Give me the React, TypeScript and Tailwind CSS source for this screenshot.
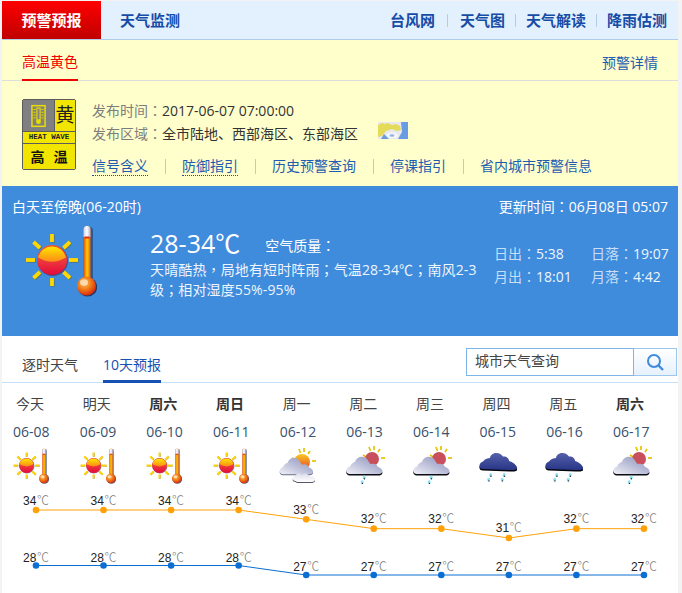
const FONT = '"Open Sans","Noto Sans CJK SC",sans-serif';

type Kind = 'sun' | 'partly' | 'rainSun' | 'rain';

function P({ c }: { c: string }) {
  return <span className="font-['Noto_Sans_CJK_TC']">{c}</span>;
}

function Sun() {
  const rays = [
    [27, 9, 27, 17], [27, 53, 27, 61], [1, 35, 10, 35], [44, 35, 53, 35],
    [8.5, 17, 15, 23], [45, 17, 38.5, 23], [8.5, 53, 15, 47], [45, 53, 38.5, 47],
  ];
  return (
    <svg viewBox="0 0 72 72" className="block h-full w-full">
      <defs>
        <linearGradient id="sunBody" x1="0" y1="0" x2="0" y2="1">
          <stop offset="0" stopColor="#f25a30" />
          <stop offset="0.5" stopColor="#ee3a3c" />
          <stop offset="1" stopColor="#e20a3c" />
        </linearGradient>
        <linearGradient id="sunTop" x1="0" y1="0" x2="0" y2="1">
          <stop offset="0" stopColor="#ffe600" />
          <stop offset="1" stopColor="#fb8a18" />
        </linearGradient>
        <linearGradient id="tube" x1="0" y1="0" x2="1" y2="0">
          <stop offset="0" stopColor="#e8400e" />
          <stop offset="0.5" stopColor="#ffd000" />
          <stop offset="1" stopColor="#e8600a" />
        </linearGradient>
        <radialGradient id="bulb" cx="0.4" cy="0.35" r="0.7">
          <stop offset="0" stopColor="#fbbf6a" />
          <stop offset="0.5" stopColor="#f07a12" />
          <stop offset="1" stopColor="#d81e14" />
        </radialGradient>
        <linearGradient id="glass" x1="0" y1="0" x2="1" y2="0">
          <stop offset="0" stopColor="#c9cfe6" />
          <stop offset="0.5" stopColor="#ffffff" />
          <stop offset="1" stopColor="#a9b0d0" />
        </linearGradient>
      </defs>
      {rays.map((r, i) => (
        <g key={i}>
          <line x1={r[0] + 0.7} y1={r[1] + 0.7} x2={r[2] + 0.7} y2={r[3] + 0.7} stroke="#6b5a10" strokeOpacity="0.5" strokeWidth="4" />
          <line x1={r[0]} y1={r[1]} x2={r[2]} y2={r[3]} stroke="#ffd800" strokeWidth="3.8" />
        </g>
      ))}
      <circle cx="27.8" cy="35.8" r="15.2" fill="#4a2030" fillOpacity="0.55" />
      <circle cx="27" cy="35" r="15" fill="url(#sunBody)" />
      <path d="M13 32.5 A14.4 14.4 0 0 1 41 32.5 Q27 41 13 32.5 Z" fill="url(#sunTop)" />
      <rect x="61" y="2" width="7" height="58" rx="3.5" fill="#1b2a50" fillOpacity="0.5" />
      <rect x="58.5" y="1" width="7" height="58" rx="3.5" fill="url(#tube)" />
      <path d="M58.5 12 V4.5 a3.5 3.5 0 0 1 7 0 V12 Z" fill="url(#glass)" />
      <rect x="59.5" y="11.5" width="5" height="2" fill="#e0301c" />
      <circle cx="62.6" cy="62" r="9.6" fill="#1b1b2a" fillOpacity="0.7" />
      <circle cx="61.5" cy="61" r="9.5" fill="url(#bulb)" />
      <ellipse cx="59" cy="57.5" rx="4" ry="3.2" fill="#ffe2b8" fillOpacity="0.85" />
    </svg>
  );
}

const CLOUD =
  'M4 26 C-1 26 -1 20 4 18.5 C5 15.5 8 14 9 14 C10 9 17 6.5 21 11 C23 14 24 16 25 16 C28 15 31 16 32 19 C36 20 38 24 35 25.5 C34 26 33 26 31 26 Z';
const DARK =
  'M3 21 C-2 21 -1.5 15 3 13.5 C5 10.5 8 10 10 10 C11 4.5 19 3 23 8.5 C26 8 29 10 29 13 C33 14 38 18 37 21 C36 22 33 22 30 22 Z';

function Drop({ x, y }: { x: number; y: number }) {
  return (
    <g>
      <ellipse cx={x + 1.2} cy={y} rx="1.5" ry="1.9" fill="#8fdff2" />
      <ellipse cx={x - 0.8} cy={y + 4.6} rx="1.5" ry="1.9" fill="#8fdff2" />
      <circle cx={x + 1.4} cy={y + 1.3} r="0.7" fill="#26303c" />
      <circle cx={x - 0.6} cy={y + 5.9} r="0.7" fill="#26303c" />
    </g>
  );
}

function SmallSun({ cx, cy, r, faded }: { cx: number; cy: number; r: number; faded?: boolean }) {
  const rays = [
    [cx - 3, cy - r - 5, cx - 1.5, cy - r - 1], [cx + 2, cy - r - 6, cx + 2, cy - r - 2],
    [cx + 8, cy - r - 3, cx + 6, cy - r], [cx + r + 2, cy - 1, cx + r + 6, cy - 1],
    [cx - r - 2, cy - 4, cx - r + 1, cy - 2],
  ];
  return (
    <g>
      {rays.map((a, i) => (
        <line key={i} x1={a[0]} y1={a[1]} x2={a[2]} y2={a[3]} stroke="#e6c200" strokeWidth="1.7" />
      ))}
      <circle cx={cx} cy={cy} r={r} fill={faded ? '#c8505c' : 'url(#psun)'} />
    </g>
  );
}

function CloudIcon({ kind }: { kind: Kind }) {
  return (
    <svg viewBox="0 0 36 36" className="block h-full w-full overflow-visible">
      <defs>
        <linearGradient id="psun" x1="0" y1="0" x2="0" y2="1">
          <stop offset="0" stopColor="#f8c820" />
          <stop offset="1" stopColor="#e8402c" />
        </linearGradient>
        <linearGradient id="light" x1="0" y1="1" x2="1" y2="0">
          <stop offset="0" stopColor="#f0f0f8" />
          <stop offset="0.55" stopColor="#b4b8d4" />
          <stop offset="1" stopColor="#8e92b8" />
        </linearGradient>
        <linearGradient id="pale" x1="0" y1="0" x2="0" y2="1">
          <stop offset="0" stopColor="#dcdcec" />
          <stop offset="1" stopColor="#ffffff" />
        </linearGradient>
        <linearGradient id="dark" x1="0" y1="0" x2="0" y2="1">
          <stop offset="0" stopColor="#5560a8" />
          <stop offset="1" stopColor="#283688" />
        </linearGradient>
      </defs>
      {kind === 'partly' && (
        <g>
          <SmallSun cx={22} cy={14} r={8} />
          <path d={CLOUD} transform="translate(-0.5 2.5) scale(0.92 0.95)" fill="#6b6f88" />
          <path d={CLOUD} transform="translate(-0.5 1.5) scale(0.92 0.95)" fill="url(#light)" />
          <path d="M15.5 34 C12 34 11.5 30 15 29.5 C15.5 26.5 20 25.5 22 27.5 C24.5 25.5 29 27 29 29.5 C33 29 35.5 31 35 33 C34.5 34.5 33 35 31 35 H17 Z" fill="#55586c" />
          <path d="M15.5 33 C12 33 11.5 29 15 28.5 C15.5 25.5 20 24.5 22 26.5 C24.5 24.5 29 26 29 28.5 C33 28 35.5 30 35 32 C34.5 33.5 33 34 31 34 H17 Z" fill="url(#pale)" />
        </g>
      )}
      {kind === 'rainSun' && (
        <g>
          <SmallSun cx={26} cy={11} r={7} faded />
          <path d={CLOUD} transform="translate(0 1.6)" fill="#0c0c14" />
          <path d={CLOUD} fill="url(#light)" />
          <Drop x={17} y={29.5} />
        </g>
      )}
      {kind === 'rain' && (
        <g>
          <path d={DARK} transform="translate(0 1.6)" fill="#05070f" />
          <path d={DARK} fill="url(#dark)" />
          <Drop x={9.5} y={27} />
          <Drop x={23} y={27} />
        </g>
      )}
    </svg>
  );
}

function WarningSign() {
  return (
    <div className="flex h-[71px] w-[54px] flex-col gap-px rounded-[2px] border border-[#5c5c5c] bg-[#5c5c5c]">
      <div className="flex h-[31px] gap-px">
        <div className="flex w-[31px] items-center justify-center bg-[#808080]">
          <svg viewBox="0 0 16 24" className="h-[24px] w-[15px]">
            <rect x="1" y="1" width="14" height="22" fill="none" stroke="#e8dc00" strokeWidth="1.6" />
            <rect x="6.3" y="3.5" width="3.4" height="13" fill="#808080" stroke="#e8dc00" strokeWidth="1.2" />
            <circle cx="8" cy="18" r="2.6" fill="#e8dc00" />
            <path d="M2.5 5H5M2.5 8H5M2.5 11H5M2.5 14H5M11 5H13.5M11 8H13.5M11 11H13.5M11 14H13.5" stroke="#e8dc00" strokeWidth="1" />
          </svg>
        </div>
        <div className="flex flex-1 items-center justify-center bg-[#f2e600] text-[19px] leading-none text-[#222]">黄</div>
      </div>
      <div className="flex h-[11px] items-center justify-center bg-[#f2e600] font-['Liberation_Mono'] text-[7.5px] leading-none font-bold text-[#222]">HEAT WAVE</div>
      <div className="flex flex-1 items-center justify-center gap-[9px] bg-[#f2e600] text-[14px] leading-none font-bold text-[#111]">
        <span>高</span>
        <span>温</span>
      </div>
    </div>
  );
}

function MapThumb() {
  return (
    <svg viewBox="0 0 30 17" className="mb-[6px] ml-[20px] block h-[17px] w-[30px]">
      <rect width="30" height="17" fill="#e8e8ee" />
      <path d="M0 3 L4 1 L7 2 L10 1 L14 3 L18 2 L22 4 L23 8 L19 9 L14 7 L8 9 L4 14 L0 15 Z" fill="#e4dc58" />
      <path d="M23 0 H30 V17 H20 L24 10 Z" fill="#6a9ce4" />
      <ellipse cx="14" cy="13.5" rx="6" ry="3" fill="#f4f6fb" />
      <path d="M6 12 L11 17 H3 Z" fill="#6a9ce4" />
      <ellipse cx="14" cy="13.5" rx="2.4" ry="1.2" fill="#8fb3e6" />
    </svg>
  );
}

const LINKS = ['信号含义', '防御指引', '历史预警查询', '停课指引', '省内城市预警信息'];

const DAYS: { l: string; d: string; b?: boolean; k: Kind }[] = [
  { l: '今天', d: '06-08', k: 'sun' },
  { l: '明天', d: '06-09', k: 'sun' },
  { l: '周六', d: '06-10', b: true, k: 'sun' },
  { l: '周日', d: '06-11', b: true, k: 'sun' },
  { l: '周一', d: '06-12', k: 'partly' },
  { l: '周二', d: '06-13', k: 'rainSun' },
  { l: '周三', d: '06-14', k: 'rainSun' },
  { l: '周四', d: '06-15', k: 'rain' },
  { l: '周五', d: '06-16', k: 'rain' },
  { l: '周六', d: '06-17', b: true, k: 'rainSun' },
];

const HIGH = [34, 34, 34, 34, 33, 32, 32, 31, 32, 32];
const LOW = [28, 28, 28, 28, 27, 27, 27, 27, 27, 27];
const xAt = (i: number) => 36 + i * 67.55;
const yHigh = (t: number) => 510 + (34 - t) * 9.33;
const yLow = (t: number) => (t === 28 ? 565.5 : 575);

function Chart() {
  const series = [
    { data: HIGH, y: yHigh, color: '#ffa20a', off: -5.5 },
    { data: LOW, y: yLow, color: '#0a6ed2', off: -4 },
  ];
  return (
    <svg viewBox="2 489 676 104" className="block h-[104px] w-[676px]">
      {series.map((s, si) => (
        <g key={si}>
          <polyline
            points={s.data.map((t, i) => `${xAt(i)},${s.y(t)}`).join(' ')}
            fill="none"
            stroke={s.color}
            strokeWidth="1"
          />
          {s.data.map((t, i) => (
            <g key={i}>
              <circle cx={xAt(i)} cy={s.y(t)} r="3.3" fill={s.color} />
              <text x={xAt(i) - 13} y={s.y(t) + s.off} fontFamily="'Liberation Sans',sans-serif" fontSize="12" fill="#222">
                {t}
              </text>
              <text x={xAt(i) + 1} y={s.y(t) + s.off} fontFamily="'Noto Sans CJK SC',sans-serif" fontWeight="300" fontSize="12" fill="#777">
                ℃
              </text>
            </g>
          ))}
        </g>
      ))}
    </svg>
  );
}

export default function App() {
  return (
    <div className="h-[593px] w-[682px] overflow-hidden bg-[#f3f3f3] pt-px pl-[2px]" style={{ fontFamily: FONT }}>
      <div className="h-[592px] w-[676px] bg-white">
        {/* top navigation */}
        <div className="flex h-[39px] items-center border-b border-[#b0cce8] bg-[#e3f1ff] text-[15px] leading-none font-bold text-[#174ca6]">
          <div className="flex h-full w-[99px] items-center justify-center bg-gradient-to-b from-[#ff0000] to-[#c00000] text-white">预警预报</div>
          <div className="ml-[19px]">天气监测</div>
          <div className="ml-auto flex items-center pr-[11px]">
            <span>台风网</span>
            <span className="mx-[12px] h-[13px] w-px bg-[#b0cce8]" />
            <span>天气图</span>
            <span className="mx-[10px] h-[13px] w-px bg-[#b0cce8]" />
            <span>天气解读</span>
            <span className="mx-[10px] h-[13px] w-px bg-[#b0cce8]" />
            <span>降雨估测</span>
          </div>
        </div>

        {/* warning */}
        <div className="h-[146px] bg-[#ffffcc]">
          <div className="flex h-[41px] items-stretch justify-between border-b border-[#dddddd] px-[20px] text-[14px]">
            <div className="-mb-px flex items-center border-b-2 border-[#f00000] pt-[4px] text-[#f00000]">高温黄色</div>
            <div className="flex items-center pt-[4px] text-[#1d5cb0]">预警详情</div>
          </div>
          <div className="flex gap-[16px] pt-[18px] pl-[20px]">
            <WarningSign />
            <div className="text-[14px]">
              <div className="flex h-[23px] items-center">
                <span className="text-[#7d7d7d]">发布时间<P c="：" /></span>
                <span className="text-[#333]">2017-06-07 07:00:00</span>
              </div>
              <div className="flex h-[23px] items-center">
                <span className="text-[#7d7d7d]">发布区域<P c="：" /></span>
                <span className="text-[#333]">全市陆地、西部海区、东部海区</span>
                <MapThumb />
              </div>
              <div className="mt-[11px] flex h-[20px] items-center">
                {LINKS.map((t, i) => (
                  <div key={t} className="flex items-center">
                    {i > 0 && <span className="mx-[16.5px] h-[15px] w-[1px] bg-[#cfc9a8]" />}
                    <span className={i < 2 ? 'border-b border-dotted border-[#1d4ca0] leading-[18px] text-[#1d5cb0]' : 'leading-[18px] text-[#1d5cb0]'}>{t}</span>
                  </div>
                ))}
              </div>
            </div>
          </div>
        </div>

        {/* current weather */}
        <div className="h-[150px] bg-[#3f8bdc] text-white">
          <div className="flex h-[39px] items-center justify-between pt-[1px] pr-[10px] pl-[10px] text-[14px]">
            <span>白天至傍晚(06-20时)</span>
            <span>更新时间<P c="：" />06月08日 05:07</span>
          </div>
          <div className="flex">
            <div className="ml-[23px] h-[72px] w-[72px]">
              <Sun />
            </div>
            <div className="ml-[53px] w-[332px]">
              <div className="flex h-[36px] items-center">
                <span className="text-[25px] leading-none">28-34℃</span>
                <span className="ml-[25px] pt-[4px] text-[14px]">空气质量<P c="：" /></span>
              </div>
              <div className="mt-[-1px] font-['Open_Sans','Noto_Sans_CJK_TC',sans-serif] text-[14px] leading-[20px] tracking-[0.13px] text-[#eef5fd]">
                天晴酷热，局地有短时阵雨；气温28-34℃；南风2-3级；相对湿度55%-95%
              </div>
            </div>
            <div className="ml-[12px] grid h-[46px] grid-cols-[97px_auto] content-start pt-[17px] text-[14px] leading-[23px] text-[#eef5fd]">
              <span><span className="text-[#c8def6]">日出<P c="：" /></span>5:38</span>
              <span><span className="text-[#c8def6]">日落<P c="：" /></span>19:07</span>
              <span><span className="text-[#c8def6]">月出<P c="：" /></span>18:01</span>
              <span><span className="text-[#c8def6]">月落<P c="：" /></span>4:42</span>
            </div>
          </div>
        </div>

        {/* tabs + search */}
        <div className="flex h-[47px] items-end border-b border-[#c5dffa] pl-[20px] text-[14px]">
          <div className="mb-[7px] text-[#444]">逐时天气</div>
          <div className="-mb-px ml-[25px] border-b-[3px] border-[#1650b0] pb-[5px] text-[#1650b0]">10天预报</div>
          <div className="mr-px mb-[6px] ml-auto flex h-[28px]">
            <div className="flex w-[168px] items-center border border-[#7db4ea] bg-white pb-[4px] pl-[8px] text-[#444]">城市天气查询</div>
            <div className="flex w-[43px] items-center justify-center border border-l-0 border-[#9cc6ee] bg-gradient-to-b from-white to-[#e5f1fd]">
              <svg viewBox="0 0 18 18" className="h-[18px] w-[18px]" fill="none" stroke="#3f8bdc">
                <circle cx="8" cy="8" r="6" strokeWidth="2" />
                <path d="M12.5 12.5 L17 17" strokeWidth="2.4" />
              </svg>
            </div>
          </div>
        </div>

        {/* ten days */}
        <div className="grid grid-cols-[repeat(10,66.67px)] pl-[11px] text-[14px] text-[#444]">
          {DAYS.map((d, i) => (
            <div key={i} className="flex flex-col items-start">
              <div className={d.b ? 'mt-[11px] h-[20px] w-[34px] text-center leading-[20px] font-bold text-[#333]' : 'mt-[11px] h-[20px] w-[34px] text-center leading-[20px]'}>{d.l}</div>
              <div className="mt-[8px] h-[20px] leading-[20px] text-[#38506e]">{d.d}</div>
              <div className="mt-[6px] h-[36px] w-[36px]">
                {d.k === 'sun' ? <Sun /> : <CloudIcon kind={d.k} />}
              </div>
            </div>
          ))}
        </div>
        <div className="mt-[5px]">
          <Chart />
        </div>
      </div>
    </div>
  );
}
